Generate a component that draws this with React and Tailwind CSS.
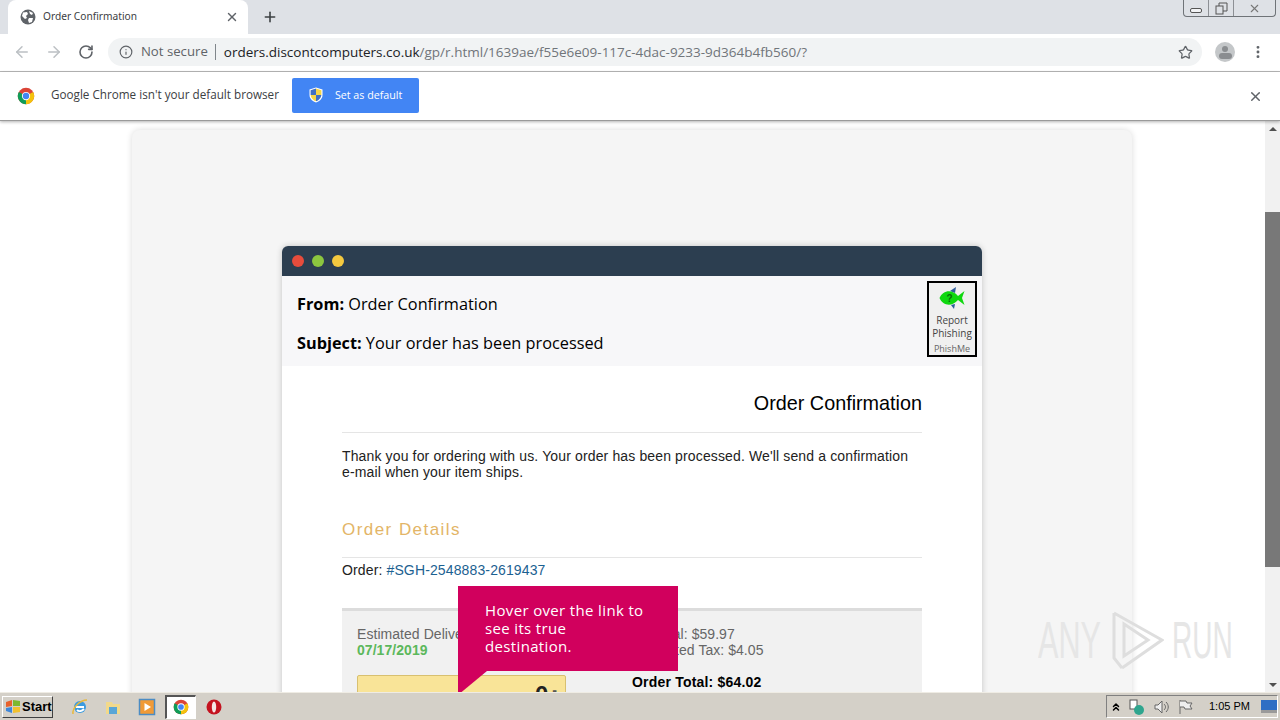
import { ArrowLeft, ArrowRight, RotateCw, Info, Star, X, Plus, MoreVertical, ChevronsUp } from "lucide-react";

function ChromeLogo({ size = 18 }) {
  return (
    <svg width={size} height={size} viewBox="0 0 48 48">
      <circle cx="24" cy="24" r="22" fill="#db4437" />
      <path d="M24 24 L43 13 A22 22 0 0 1 24 46 Z" fill="#f4c20d" />
      <path d="M24 24 L24 46 A22 22 0 0 1 5 13 Z" fill="#0f9d58" />
      <circle cx="24" cy="24" r="11" fill="#fff" />
      <circle cx="24" cy="24" r="8.5" fill="#4285f4" />
    </svg>
  );
}

function GlobeIcon() {
  return (
    <svg width="16" height="16" viewBox="0 0 16 16">
      <circle cx="8" cy="8" r="7.5" fill="#5f6368" />
      <path d="M3 3.5 L7 3 L8 5 L6 7 L7 9 L5 10 L2 7 Z M9 2 L13 4 L12 6 L10 5 Z M9 9 L13 9 L12 13 L9 14 L8 11 Z" fill="#fff" />
    </svg>
  );
}

function ShieldIcon() {
  return (
    <svg width="14" height="16" viewBox="0 0 14 16">
      <path d="M7 0.5 L13.5 2.5 V8 C13.5 12 10 14.5 7 15.5 C4 14.5 0.5 12 0.5 8 V2.5 Z" fill="#fff" />
      <path d="M7 1.6 V8 H1.6 V3.3 Z" fill="#3f6fc4" />
      <path d="M7 1.6 L12.4 3.3 V8 H7 Z" fill="#f5d547" />
      <path d="M1.6 8 H7 V14.3 C4.5 13.4 1.9 11.2 1.6 8 Z" fill="#f5d547" />
      <path d="M7 8 H12.4 C12.1 11.2 9.5 13.4 7 14.3 Z" fill="#3f6fc4" />
    </svg>
  );
}

function FishIcon() {
  return (
    <svg width="26" height="22" viewBox="0 0 26 22" className="mt-[4px]">
      <path d="M11 4 L17 0 L16 6 Z" fill="#2f5d9c" />
      <path d="M12 18 L15 22 L16 17 Z" fill="#2f5d9c" />
      <path d="M0.5 11 C4 3 13 2 19 9 L25.5 4 L23 11 L25.5 18 L19 13 C13 20 4 19 0.5 11 Z" fill="#0fd80f" />
      <text x="7.5" y="15" fontSize="10" fontWeight="700" fill="#0a6c0a" fontFamily="Liberation Sans, sans-serif">?</text>
    </svg>
  );
}

function Watermark() {
  return (
    <div className="absolute left-[1038px] top-[489px] h-[60px] flex items-center pointer-events-none font-['Liberation_Sans',sans-serif] text-[#e6e6e6]">
      <div className="w-[72px] overflow-visible">
        <span className="block origin-left scale-x-[.6] text-[51px] leading-none">ANY</span>
      </div>
      <svg width="54" height="60" viewBox="0 0 54 60">
        <path d="M4 3 L52 30 L12 58 M4 3 V48 L12 58 M14 14 L38 30 L14 46 Z" fill="none" stroke="#dedede" strokeWidth="3" />
      </svg>
      <div className="ml-[8px] w-[60px] overflow-visible">
        <span className="block origin-left scale-x-[.55] text-[51px] leading-none">RUN</span>
      </div>
    </div>
  );
}

function TaskIcon({ children, active }) {
  return (
    <div className={`w-[31px] h-[24px] flex items-center justify-center ${active ? "bg-white border-t-2 border-l-2 border-[#555] border-r border-b border-r-white border-b-white" : ""}`}>
      {children}
    </div>
  );
}

export default function App() {
  return (
    <div className="w-[1280px] h-[720px] overflow-hidden flex flex-col bg-white font-['Open_Sans',sans-serif] text-black">
      {/* tab strip */}
      <div className="h-[34px] shrink-0 bg-[#dee1e6] flex items-end relative">
        <div className="ml-[8px] w-[240px] h-[34px] bg-white rounded-t-[8px] flex items-center pl-[12px] pr-[9px]">
          <GlobeIcon />
          <span className="ml-[7px] text-[10.2px] text-[#3c4043] flex-1 font-['Noto_Sans',sans-serif]">Order Confirmation</span>
          <X size={14} strokeWidth={2.4} className="text-[#5f6368]" />
        </div>
        <Plus size={16} strokeWidth={2.4} className="ml-[14px] mb-[9px] text-[#3c4043]" />
        <div className="absolute right-[4px] top-0 w-[93px] h-[17px] flex border border-t-0 border-[#6f7378] rounded-b-[4px] text-[#555]">
          <div className="w-[25px] flex items-center justify-center border-r border-[#8d9095]">
            <div className="w-[12px] h-[5px] mt-[4px] border border-[#555] rounded-[2px] bg-white/60" />
          </div>
          <div className="w-[25px] flex items-center justify-center border-r border-[#8d9095]">
            <svg width="13" height="13" viewBox="0 0 13 13" fill="none" stroke="#555"><rect x="1" y="4" width="7" height="8" /><path d="M4 4 V1 H12 V9 H8" /></svg>
          </div>
          <div className="flex-1 flex items-center justify-center">
            <X size={13} strokeWidth={2} className="text-[#777]" />
          </div>
        </div>
      </div>

      {/* toolbar */}
      <div className="h-[38px] shrink-0 bg-white border-b border-[#b9b9b9] flex items-center pl-[13px] pr-[14px] pb-[1px]">
        <ArrowLeft size={18} strokeWidth={2} className="text-[#bcc0c4]" />
        <ArrowRight size={18} strokeWidth={2} className="ml-[14px] text-[#bcc0c4]" />
        <RotateCw size={16} strokeWidth={2.4} className="ml-[15px] text-[#5f6368]" />
        <div className="ml-[14px] w-[1096px] h-[28px] rounded-full bg-[#f1f3f4] flex items-center pl-[11px] pr-[9px]">
          <Info size={14} strokeWidth={2} className="text-[#5f6368]" />
          <span className="ml-[8px] text-[13.2px] text-[#5f6368]">Not secure</span>
          <span className="ml-[7px] w-px h-[16px] bg-[#80868b]" />
          <span className="ml-[8px] text-[13.5px] text-[#202124] whitespace-nowrap">orders.discontcomputers.co.uk<span className="text-[#70757a]">/gp/r.html/1639ae/f55e6e09-117c-4dac-9233-9d364b4fb560/?</span></span>
          <Star size={15} strokeWidth={2} className="ml-auto text-[#5f6368]" />
        </div>
        <div className="ml-[13px] w-[20px] h-[20px] rounded-full bg-[#c4c7c9] flex flex-col items-center overflow-hidden">
          <div className="w-[6px] h-[6px] rounded-full bg-[#8a8d90] mt-[4px]" />
          <div className="w-[13px] h-[6px] rounded-full bg-[#8a8d90] mt-[1px]" />
        </div>
        <MoreVertical size={16} strokeWidth={2.4} className="ml-[15px] text-[#5f6368]" />
      </div>

      {/* default browser bar */}
      <div className="h-[49px] shrink-0 bg-white border-b border-[#9a9a9a] shadow-[0_1px_3px_rgba(0,0,0,0.3)] relative z-10 flex items-center pl-[17px] pr-[17px] pb-[2px]">
        <div className="mt-[2px]"><ChromeLogo /></div>
        <span className="ml-[16px] text-[11.7px] text-[#3c4043]">Google Chrome isn't your default browser</span>
        <div className="ml-[13px] w-[127px] h-[35px] rounded-[2px] bg-[#4285f4] flex items-center pl-[17px]">
          <ShieldIcon />
          <span className="ml-[12px] text-[10.7px] text-white">Set as default</span>
        </div>
        <X size={15} strokeWidth={2.4} className="ml-auto mt-[2px] text-[#5f6368]" />
      </div>

      {/* page */}
      <div className="flex-1 min-h-0 flex relative overflow-hidden">
        <div className="flex-1 min-w-0 overflow-hidden pt-[9px] pl-[132px] pr-[133px]">
          <div className="w-[1000px] bg-[#f5f5f5] rounded-[8px] shadow-[0_0_6px_rgba(0,0,0,0.15)] pt-[116px] px-[150px] h-[700px]">
            <div className="rounded-t-[6px] shadow-[0_0_6px_rgba(0,0,0,0.2)] bg-white h-[600px]">
              <div className="h-[30px] bg-[#2c3e50] rounded-t-[6px] flex items-center gap-[8px] pl-[10px] pb-[1px]">
                <span className="w-[12px] h-[12px] rounded-full bg-[#e74c3c]" />
                <span className="w-[12px] h-[12px] rounded-full bg-[#8cc63f]" />
                <span className="w-[12px] h-[12px] rounded-full bg-[#f4c93f]" />
              </div>
              <div className="h-[90px] bg-[#f7f7f9] pl-[15px] pr-[5px] flex justify-between">
                <div className="pt-[17px] text-[16.3px] leading-[23px] text-black">
                  <p><b>From:</b> Order Confirmation</p>
                  <p className="mt-[16px]"><b>Subject:</b> Your order has been processed</p>
                </div>
                <div className="mt-[5px] w-[50px] h-[76px] border-2 border-black bg-[#f0f0f0] flex flex-col items-center text-center">
                  <FishIcon />
                  <span className="text-[10px] leading-[13px] mt-[5px] text-[#444]">Report<br />Phishing</span>
                  <span className="text-[9px] leading-[12px] mt-[3px] text-[#666]">PhishMe</span>
                </div>
              </div>
              <div className="px-[60px] pt-[24px] font-['Liberation_Sans',sans-serif]">
                <h1 className="text-[19.8px] leading-[26px] text-right pb-[16px] border-b border-[#e5e5e5]">Order Confirmation</h1>
                <p className="mt-[15px] text-[14px] leading-[16px] tracking-[0.135px] text-[#222]">Thank you for ordering with us. Your order has been processed. We'll send a confirmation e-mail when your item ships.</p>
                <h2 className="mt-[40px] text-[17px] leading-[20px] tracking-[1.45px] text-[#e3b567] pb-[17px] border-b border-[#e5e5e5]">Order Details</h2>
                <p className="mt-[4px] text-[14px] leading-[16px] tracking-[0.13px] text-[#222]">Order: <span className="text-[#1c6191]">#SGH-2548883-2619437</span></p>
                <div className="mt-[30px] h-[200px] bg-[#f1f1f1] border-t-[3px] border-[#dcdcdc] pt-[15px] pl-[15px] flex text-[14px] leading-[16px] tracking-[0.05px] text-[#666]">
                  <div className="w-[275px]">
                    <p>Estimated Delivery:</p>
                    <p className="font-bold text-[#5cb85c]">07/17/2019</p>
                    <div className="mt-[17px] w-[209px] h-[60px] bg-[#f9e498] border border-[#d8c070] rounded-[2px] flex justify-end pr-[8px] pt-[5px]">
                      <span className="text-[#222] text-[24px] font-bold leading-[28px]">0</span>
                      <span className="ml-[4px] mt-[2px] text-[#555] text-[14px] font-bold leading-[14px]">-</span>
                    </div>
                  </div>
                  <div>
                    <p>Subtotal: $59.97</p>
                    <p>Estimated Tax: $4.05</p>
                    <p className="mt-[16px] font-bold text-black tracking-[0.2px]">Order Total: $64.02</p>
                  </div>
                </div>
              </div>
            </div>
          </div>
        </div>

        {/* scrollbar */}
        <div className="w-[15px] shrink-0 bg-[#f1f1f1] flex flex-col items-center">
          <div className="h-[15px] flex items-center justify-center"><div className="w-0 h-0 border-x-[4px] border-x-transparent border-b-[4px] border-b-[#505050]" /></div>
          <div className="mt-[76px] w-full h-[355px] bg-[#787878]" />
          <div className="mt-auto h-[15px] flex items-center justify-center"><div className="w-0 h-0 border-x-[4px] border-x-transparent border-t-[4px] border-t-[#505050]" /></div>
        </div>

        {/* tooltip */}
        <div className="absolute left-[458px] top-[465px]">
          <div className="w-[220px] h-[85px] bg-[#d1005d] pl-[27px] pt-[15px] text-[15px] leading-[18px] tracking-[0.35px] text-white">
            Hover over the link to<br />see its true<br />destination.
          </div>
          <svg width="30" height="24" viewBox="0 0 30 24" className="block"><path d="M0 0 H29 L0 24 Z" fill="#d1005d" /></svg>
        </div>
        <Watermark />
      </div>

      {/* taskbar */}
      <div className="h-[28px] shrink-0 bg-[#d4d0c8] border-t border-[#efece4] flex items-center font-['Liberation_Sans',sans-serif]">
        <div className="ml-[2px] w-[51px] h-[22px] bg-[#d4d0c8] border border-t-white border-l-white border-r-[#404040] border-b-[#404040] flex items-center pl-[2px] gap-[1px]">
          <svg width="16" height="15" viewBox="0 0 16 15">
            <path d="M1 3 L7 1 V7 L1 8 Z" fill="#e8622c" />
            <path d="M8 1 L15 2 V7 L8 7 Z" fill="#7cb82f" />
            <path d="M1 9 L7 8 V14 L1 12 Z" fill="#3f87d9" />
            <path d="M8 8 L15 8 V13 L8 14 Z" fill="#f2c12e" />
          </svg>
          <span className="text-[13px] font-bold leading-none">Start</span>
        </div>
        <div className="ml-[11px] flex items-center gap-[2.5px]">
          <TaskIcon>
            <svg width="18" height="18" viewBox="0 0 18 18"><circle cx="9" cy="9" r="6" fill="#3b9be0" /><path d="M5 9 H13 M6 12 C8 14 11 13 13 11" stroke="#fff" strokeWidth="2" fill="none" /><path d="M2 16 C1 10 9 2 16 2" stroke="#e8b93c" strokeWidth="1.5" fill="none" /></svg>
          </TaskIcon>
          <TaskIcon>
            <svg width="18" height="18" viewBox="0 0 18 18"><path d="M2 4 H8 L9 6 H16 V16 H2 Z" fill="#f2d98a" /><rect x="5" y="9" width="8" height="7" fill="#5aa6d6" /></svg>
          </TaskIcon>
          <TaskIcon>
            <svg width="18" height="18" viewBox="0 0 18 18"><rect x="1.5" y="1.5" width="15" height="15" fill="#f09a37" stroke="#4b8cc4" strokeWidth="1.5" /><path d="M6.5 5 L13 9 L6.5 13 Z" fill="#fff" /></svg>
          </TaskIcon>
          <TaskIcon active><ChromeLogo size={16} /></TaskIcon>
          <TaskIcon>
            <svg width="16" height="16" viewBox="0 0 16 16"><circle cx="8" cy="8" r="7.5" fill="#c4121f" /><ellipse cx="8" cy="8" rx="2.2" ry="5.5" fill="#f5e5e5" /></svg>
          </TaskIcon>
        </div>
        <div className="ml-auto mr-[2px] w-[172px] h-[23px] border border-t-[#808080] border-l-[#808080] border-r-white border-b-white flex items-center pl-[3px]">
          <ChevronsUp size={12} strokeWidth={3} className="shrink-0" />
          <svg width="16" height="16" viewBox="0 0 16 16" className="ml-[7px] shrink-0"><rect x="1" y="1" width="7" height="9" fill="#fff" stroke="#555" /><circle cx="10" cy="11" r="5" fill="#2fa58e" /></svg>
          <svg width="16" height="16" viewBox="0 0 16 16" className="ml-[8px] shrink-0" fill="none" stroke="#666"><path d="M2 6 H5 L9 2 V14 L5 10 H2 Z" fill="#eee" /><path d="M11 5 C13 7 13 9 11 11 M13 3 C16 6 16 10 13 13" /></svg>
          <svg width="15" height="16" viewBox="0 0 15 16" className="ml-[9px] shrink-0" fill="none" stroke="#666"><path d="M2 1 V15" /><path d="M2 2 H8 L9 4 H14 L12 7 L14 10 H7 L6 8 H2" fill="#eee" /></svg>
          <span className="ml-[16px] text-[11px] text-black whitespace-nowrap">1:05 PM</span>
          <svg width="16" height="14" viewBox="0 0 16 14" className="ml-[11px] shrink-0"><rect width="16" height="12" fill="#2f6fc4" /><rect y="10" width="16" height="3" fill="#9a9a9a" /></svg>
        </div>
      </div>
    </div>
  );
}
